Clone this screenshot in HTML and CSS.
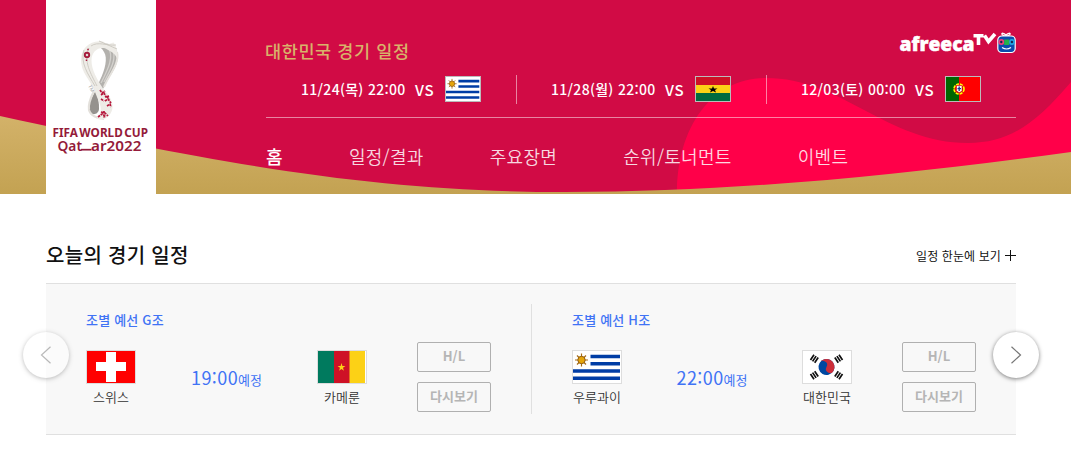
FILE: index.html
```html
<!DOCTYPE html>
<html lang="ko">
<head>
    <meta charset="UTF-8">
    <meta name="viewport" content="width=device-width, initial-scale=1.0">
    <title>FIFA 월드컵 카타르 2022 - afreecaTV</title>
    <link rel="stylesheet" href="styles.css">
</head>
<body>
    <!-- 국기 -->
    <svg class="symbols" width="0" height="0">
        <symbol id="flag-uy" viewBox="0 0 48 32" preserveAspectRatio="none">
            <rect width="48" height="32" fill="#fff"/>
            <path d="M17.500 5.500H47M17.500 12.700H47M0 20h47M0 27.300h47" stroke="#003da5" stroke-width="3.400"/>
            <path d="M8.500 2.500v13M2 9h13M4 4.500l9 9M13 4.500l-9 9" stroke="#a86d16" stroke-width="1.200"/>
            <circle cx="8.500" cy="9" r="3.700" fill="#e5a50a" stroke="#8f5b16"/>
        </symbol>
        <symbol id="flag-gh" viewBox="0 0 34 24" preserveAspectRatio="none">
            <rect width="34" height="8" fill="#ce1126"/>
            <rect y="8" width="34" height="8" fill="#fcd116"/>
            <rect y="16" width="34" height="8" fill="#006b3f"/>
            <path d="M17 9l1 2.500h3.500l-2.500 1.500 1 2.500-3-1.500-3 1.500 1-2.500-2.500-1.500H16z" fill="#000"/>
        </symbol>
        <symbol id="flag-pt" viewBox="0 0 34 24" preserveAspectRatio="none">
            <rect width="34" height="24" fill="#f00"/>
            <rect width="13" height="24" fill="#060"/>
            <circle cx="13" cy="12" r="5" fill="#d01010" stroke="#ff0" stroke-width="1.600" stroke-dasharray="3 1"/>
            <path d="M10.500 8.500h5.500v5q-2.700 4-5.500 0z" fill="#fff" stroke="#d00" stroke-width=".6"/>
            <path d="M13.200 9.500v4.500M11.500 11.700h3.500" stroke="#113a8c" stroke-width="1.300"/>
        </symbol>
        <symbol id="flag-ch" viewBox="0 0 48 32" preserveAspectRatio="none">
            <rect width="48" height="32" fill="#f00"/>
            <path d="M19 1h10v10h10v9H29v11H19V20H9v-9h10z" fill="#fff"/>
        </symbol>
        <symbol id="flag-cm" viewBox="0 0 48 32" preserveAspectRatio="none">
            <rect width="48" height="32" fill="#fff"/>
            <rect width="16" height="32" fill="#007a5e"/>
            <rect x="16" width="16" height="32" fill="#ce1126"/>
            <rect x="31.500" width="15.500" height="32" fill="#fcd116"/>
            <path d="M23.500 12l.9 2.900h3l-2.400 1.900.9 2.900-2.400-1.800-2.400 1.800.9-2.900-2.400-1.900h3z" fill="#fcd116"/>
        </symbol>
        <symbol id="flag-kr" viewBox="0 0 48 32" preserveAspectRatio="none">
            <rect width="48" height="32" fill="#fff"/>
            <g transform="rotate(30 23.500 16)">
                <circle cx="23.500" cy="16" r="8" fill="#0047a0"/>
                <path d="M15.500 16a8 8 0 0 1 16 0 4 4 0 0 1-8 0 4 4 0 0 0-8 0z" fill="#cd2e3a"/>
            </g>
            <g stroke="#111" stroke-width="1.700">
                <path d="M7.500 9l3.500-5.300M9.600 10.400l3.500-5.300M11.700 11.800l3.500-5.300M39.500 9L36 3.700M37.400 10.400l-3.500-5.300M35.300 11.800l-3.500-5.300"/>
                <path d="M7.500 23l3.500 5.300M9.600 21.600l3.500 5.300M11.700 20.200l3.500 5.300M39.500 23L36 28.300M37.400 21.600l-3.500 5.300M35.300 20.200l-3.500 5.300"/>
            </g>
        </symbol>
    </svg>

    <header class="header">
        <svg class="header-bg" viewBox="0 0 1071 194" preserveAspectRatio="none">
            <defs>
                <linearGradient id="gold" x1="0" y1="116" x2="0" y2="194" gradientUnits="userSpaceOnUse">
                    <stop offset="0" stop-color="#d3b269"/>
                    <stop offset="1" stop-color="#c3a252"/>
                </linearGradient>
            </defs>
            <rect width="1071" height="194" fill="#d10b45"/>
            <path d="M677 194C677 125 713 78 766 78c76 0 121 65 202 65 42 0 68-20 103-61v112z" fill="#ff0049"/>
            <path d="M0 116C240 169 390 192 565 192C740 192 910 174 1071 152V194H0z" fill="url(#gold)"/>
        </svg>

        <h1 class="logo">
            <svg width="110" height="194" viewBox="46 0 110 194">
                <path d="M99 45c8-4 19 0 19 12-1 12-10 20-15 32l-6 12-4-5 7-16c5-10 8-22 4-28-2-4-4-5-7-5z" fill="#b3b1ad"/>
                <path d="M108 47c7 10-1 24-7 36M112 48c6 11-3 24-8 34" fill="none" stroke="#d3d1cd" stroke-width="1.300"/>
                <path d="M117 52c3 12-9 24-13 35" fill="none" stroke="#e5e2dd" stroke-width="2"/>
                <path d="M96 91c-5 7-7.500 12-7.500 17 0 8 10 8 10.500 1 .3-6-1-11-3-18z" fill="#95928e"/>
                <path d="M94 91c-4 8-6 14-5 19 2 7 10 8 15 9" fill="none" stroke="#e3e0db" stroke-width="2.200"/>
                <path d="M103 41.500c-13-2-22 7-22 18 0 13 8 19 13 30l6 15c2 6 0 11-4 14 9 4 16-4 16.500-11 .5-9-6-14-9.500-19-6-9-11.500-19-11.500-28 0-9 7-14 14-12l7 4c3 2 4 5 5 7 0-9-1-13-4-17l-6 2z" fill="#eeece7"/>
                <path d="M89 48c-6 13 2 26 8 38M84 50c-4 13 4 24 11 36M91 46c7-5 16 0 25-1M99 41c6 3 12 5 18 8" fill="none" stroke="#cbc7c0" stroke-width=".9"/>
                <circle cx="87" cy="55" r="2.200" fill="none" stroke="#a51c3c" stroke-width="1.900"/>
                <path d="M88 48.800v1.500M86.500 59.500v1.500" stroke="#a51c3c" stroke-width="1.500"/>
                <path d="M100 90l2 3 3-2M101 95l3-2 2 4 3-1M105 101l3-2 3 4M107 96l2 4M101 99l3 2M107 106l3-2 1 3M98 117l4-3 4 3M101 112l4 1 3 3M104 111v7" fill="none" stroke="#b5163b" stroke-width="1.700" stroke-dasharray="2.500 .8"/>
                <text class="logo-tm" x="88" y="86" transform="rotate(60 88 86)">TM</text>
                <text class="logo-fifa" x="52.500" y="137" textLength="95.500" lengthAdjust="spacingAndGlyphs">FIFA WORLD CUP</text>
                <text class="logo-qatar" x="57.500" y="150.500" textLength="24.500" lengthAdjust="spacingAndGlyphs">Qat</text>
                <path d="M81 149.700h10.500" stroke="#941b3a" stroke-width="1.700"/>
                <text class="logo-qatar" x="91" y="150.500" textLength="50.500" lengthAdjust="spacingAndGlyphs">ar2022</text>
            </svg>
        </h1>

        <div class="header-body">
            <div class="header-top">
                <h2 class="kor-title">대한민국 경기 일정</h2>
                <a class="afreeca" href="#">
                    <svg width="118" height="24" viewBox="0 0 118 24">
                        <text class="afreeca-name" x="1.500" y="19.500" textLength="75" lengthAdjust="spacingAndGlyphs">afreeca</text>
                        <path d="M75.500 4.700h10M80.500 4.700V14M86.500 4.500l4 6 6.500-7.500" fill="none" stroke="#fff" stroke-width="3.600"/>
                        <path d="M108 4c-5-4-6 0 0 1.500 6-1.500 5-5.500 0-1.500z" fill="none" stroke="#fff" stroke-width="1.300"/>
                        <rect x="99.800" y="5" width="17.400" height="16.500" rx="4" fill="#0b4bad" stroke="#fff" stroke-width="1.200"/>
                        <circle cx="103.300" cy="11" r="3" fill="#ef3e79"/>
                        <circle cx="113.900" cy="11" r="3" fill="#20a5e2"/>
                        <rect x="106.200" y="8.500" width="5" height="5.500" fill="#23b14b"/>
                        <circle cx="103.300" cy="11" r="1.200" fill="#152450"/>
                        <circle cx="113.900" cy="11" r="1.200" fill="#152450"/>
                        <path d="M104 16.500q4.500 3 9 0" fill="none" stroke="#fff" stroke-width="1.200"/>
                    </svg>
                </a>
            </div>
            <ul class="kor-list">
                <li>
                    <span class="kor-date">11/24(목) 22:00</span>
                    <span class="kor-vs">VS</span>
                    <svg class="flag-s"><use href="#flag-uy"/></svg>
                </li>
                <li>
                    <span class="kor-date">11/28(월) 22:00</span>
                    <span class="kor-vs">VS</span>
                    <svg class="flag-s"><use href="#flag-gh"/></svg>
                </li>
                <li>
                    <span class="kor-date">12/03(토) 00:00</span>
                    <span class="kor-vs">VS</span>
                    <svg class="flag-s"><use href="#flag-pt"/></svg>
                </li>
            </ul>
            <nav class="gnb">
                <a class="on" href="#">홈</a>
                <a href="#">일정/결과</a>
                <a href="#">주요장면</a>
                <a href="#">순위/토너먼트</a>
                <a href="#">이벤트</a>
            </nav>
        </div>
    </header>

    <section class="today">
        <div class="today-head">
            <h2>오늘의 경기 일정</h2>
            <a class="more" href="#">일정 한눈에 보기
                <svg width="11" height="11" viewBox="0 0 11 11"><path d="M5.500 0v11M0 5.500h11" stroke="#111"/></svg>
            </a>
        </div>

        <div class="match-wrap">
            <div class="match">
                <strong class="group">조별 예선 G조</strong>
                <div class="match-body">
                    <div class="team">
                        <svg class="flag"><use href="#flag-ch"/></svg>
                        <span>스위스</span>
                    </div>
                    <p class="time"><b>19:00</b>예정</p>
                    <div class="team">
                        <svg class="flag"><use href="#flag-cm"/></svg>
                        <span>카메룬</span>
                    </div>
                    <div class="btns">
                        <button type="button">H/L</button>
                        <button type="button">다시보기</button>
                    </div>
                </div>
            </div>
            <div class="match">
                <strong class="group">조별 예선 H조</strong>
                <div class="match-body">
                    <div class="team">
                        <svg class="flag"><use href="#flag-uy"/></svg>
                        <span>우루과이</span>
                    </div>
                    <p class="time"><b>22:00</b>예정</p>
                    <div class="team">
                        <svg class="flag"><use href="#flag-kr"/></svg>
                        <span>대한민국</span>
                    </div>
                    <div class="btns">
                        <button type="button">H/L</button>
                        <button type="button">다시보기</button>
                    </div>
                </div>
            </div>
            <button class="arrow prev" type="button" aria-label="이전">
                <svg width="12" height="18" viewBox="0 0 12 18"><path d="M10.500 .8L1.500 9l9 8.200" fill="none" stroke="#777" stroke-width="1.200"/></svg>
            </button>
            <button class="arrow next" type="button" aria-label="다음">
                <svg width="12" height="18" viewBox="0 0 12 18"><path d="M1.500 .8l9 8.200-9 8.200" fill="none" stroke="#777" stroke-width="1.200"/></svg>
            </button>
        </div>
    </section>
</body>
</html>
```
FILE: styles.css
```css
* {
    margin: 0;
    padding: 0;
    box-sizing: border-box;
}

body {
    background: #fff;
    color: #111;
    font-family: 'Noto Sans CJK KR', sans-serif;
    font-size: 12px;
    overflow: hidden;
}

a {
    color: inherit;
    text-decoration: none;
}

ul {
    list-style: none;
}

svg {
    display: block;
}

.symbols {
    position: absolute;
}

/* 헤더 */
.header {
    position: relative;
    display: flex;
    height: 194px;
    padding-left: 46px;
}

.header-bg {
    position: absolute;
    top: 0;
    left: 0;
    width: 100%;
    height: 194px;
}

.logo {
    position: relative;
    width: 110px;
    background: #fff;
}

.logo svg,
.afreeca svg {
    overflow: visible;
}

.logo-tm {
    font: 5px 'Liberation Sans', sans-serif;
    fill: #999;
}

.logo-fifa {
    font: 700 11.5px 'Noto Sans', sans-serif;
    fill: #941b3a;
    word-spacing: -1.5px;
}

.logo-qatar {
    font: 600 14.5px 'Noto Sans', sans-serif;
    fill: #941b3a;
}

.header-body {
    position: relative;
    width: 751px;
    margin-left: 109px;
    padding-top: 31px;
}

.header-top {
    display: flex;
    justify-content: space-between;
    height: 44px;
}

.kor-title {
    margin-top: 8px;
    color: #d8b36a;
    font-size: 17.5px;
    font-weight: 500;
    line-height: 24px;
    letter-spacing: 0.6px;
}

.afreeca-name {
    font: 800 20px 'Open Sans', sans-serif;
    fill: #fff;
    stroke: #fff;
    stroke-width: 0.5px;
}

.kor-list {
    display: flex;
    height: 43px;
    margin-left: 1px;
    border-bottom: 1px solid rgba(255, 255, 255, 0.5);
}

.kor-list li {
    position: relative;
    display: flex;
    align-items: center;
    width: 250px;
    height: 28px;
    padding-left: 35px;
    color: #fff;
    font-size: 14px;
    font-weight: 500;
}

.kor-list li + li::before {
    content: '';
    position: absolute;
    left: 0;
    top: 0;
    width: 1px;
    height: 29px;
    background: rgba(255, 255, 255, 0.5);
}

.kor-date {
    width: 114px;
    letter-spacing: 0.3px;
    white-space: nowrap;
}

.kor-vs {
    width: 30px;
    font-size: 15px;
    letter-spacing: 0.8px;
}

.flag-s {
    width: 36px;
    height: 26px;
    border: 1px solid #bbb;
}

.gnb {
    display: flex;
    gap: 66px;
    padding: 26px 0 0 1px;
    color: rgba(255, 255, 255, 0.85);
    font-size: 18px;
    font-weight: 350;
    line-height: 24px;
    letter-spacing: 0.3px;
    white-space: nowrap;
}

.gnb .on {
    color: #fff;
    font-weight: 500;
}

/* 오늘의 경기 일정 */
.today {
    width: 970px;
    margin-left: 46px;
    padding-top: 44px;
}

.today-head {
    display: flex;
    justify-content: space-between;
    height: 45px;
}

.today-head h2 {
    font-size: 20px;
    font-weight: 500;
    line-height: 34px;
    letter-spacing: 0.3px;
}

.more {
    display: flex;
    align-items: center;
    gap: 4px;
    height: 35px;
    font-size: 12px;
    letter-spacing: 0.1px;
}

.match-wrap {
    position: relative;
    display: flex;
    height: 152px;
    background: #f8f8f8;
    border-top: 1px solid #e0e0e0;
    border-bottom: 1px solid #e0e0e0;
}

.match {
    position: relative;
    width: 485px;
    padding: 26px 0 0 40px;
}

.match + .match {
    padding-left: 41px;
}

.match + .match::before {
    content: '';
    position: absolute;
    left: 0;
    top: 20px;
    width: 1px;
    height: 110px;
    background: #e0e0e0;
}

.group {
    display: block;
    color: #4073f5;
    font-size: 13px;
    font-weight: 500;
    line-height: 20px;
    letter-spacing: 0.2px;
}

.match-body {
    display: flex;
    padding-top: 12px;
}

.team {
    width: 50px;
    padding-top: 8px;
    color: #333;
    font-size: 13px;
    font-weight: 350;
    line-height: 18px;
    text-align: center;
    white-space: nowrap;
}

.team span {
    display: block;
    margin-top: 4px;
}

.flag {
    width: 50px;
    height: 34px;
    border: 1px solid #ddd;
}

.time {
    width: 181px;
    padding-top: 23px;
    color: #4073f5;
    font-size: 13px;
    line-height: 24px;
    text-align: center;
}

.match + .match .time {
    width: 180px;
}

.time b {
    font-size: 18px;
    font-weight: 400;
    letter-spacing: 0.4px;
}

.btns {
    display: flex;
    flex-direction: column;
    gap: 10px;
    margin-left: 50px;
}

.btns button {
    width: 74px;
    height: 30px;
    background: transparent;
    border: 1px solid #b0b0b0;
    border-radius: 2px;
    color: #b5b5b5;
    font-family: inherit;
    font-size: 13px;
    font-weight: 700;
    line-height: 26px;
    padding-bottom: 2px;
}

.arrow {
    position: absolute;
    top: 48px;
    display: flex;
    align-items: center;
    justify-content: center;
    width: 46px;
    height: 46px;
    background: #fff;
    border: 0;
    border-radius: 50%;
    box-shadow: 0 1px 4px rgba(0, 0, 0, 0.5);
}

.prev {
    left: -23px;
    opacity: 0.5;
}

.next {
    right: -23px;
}
```
